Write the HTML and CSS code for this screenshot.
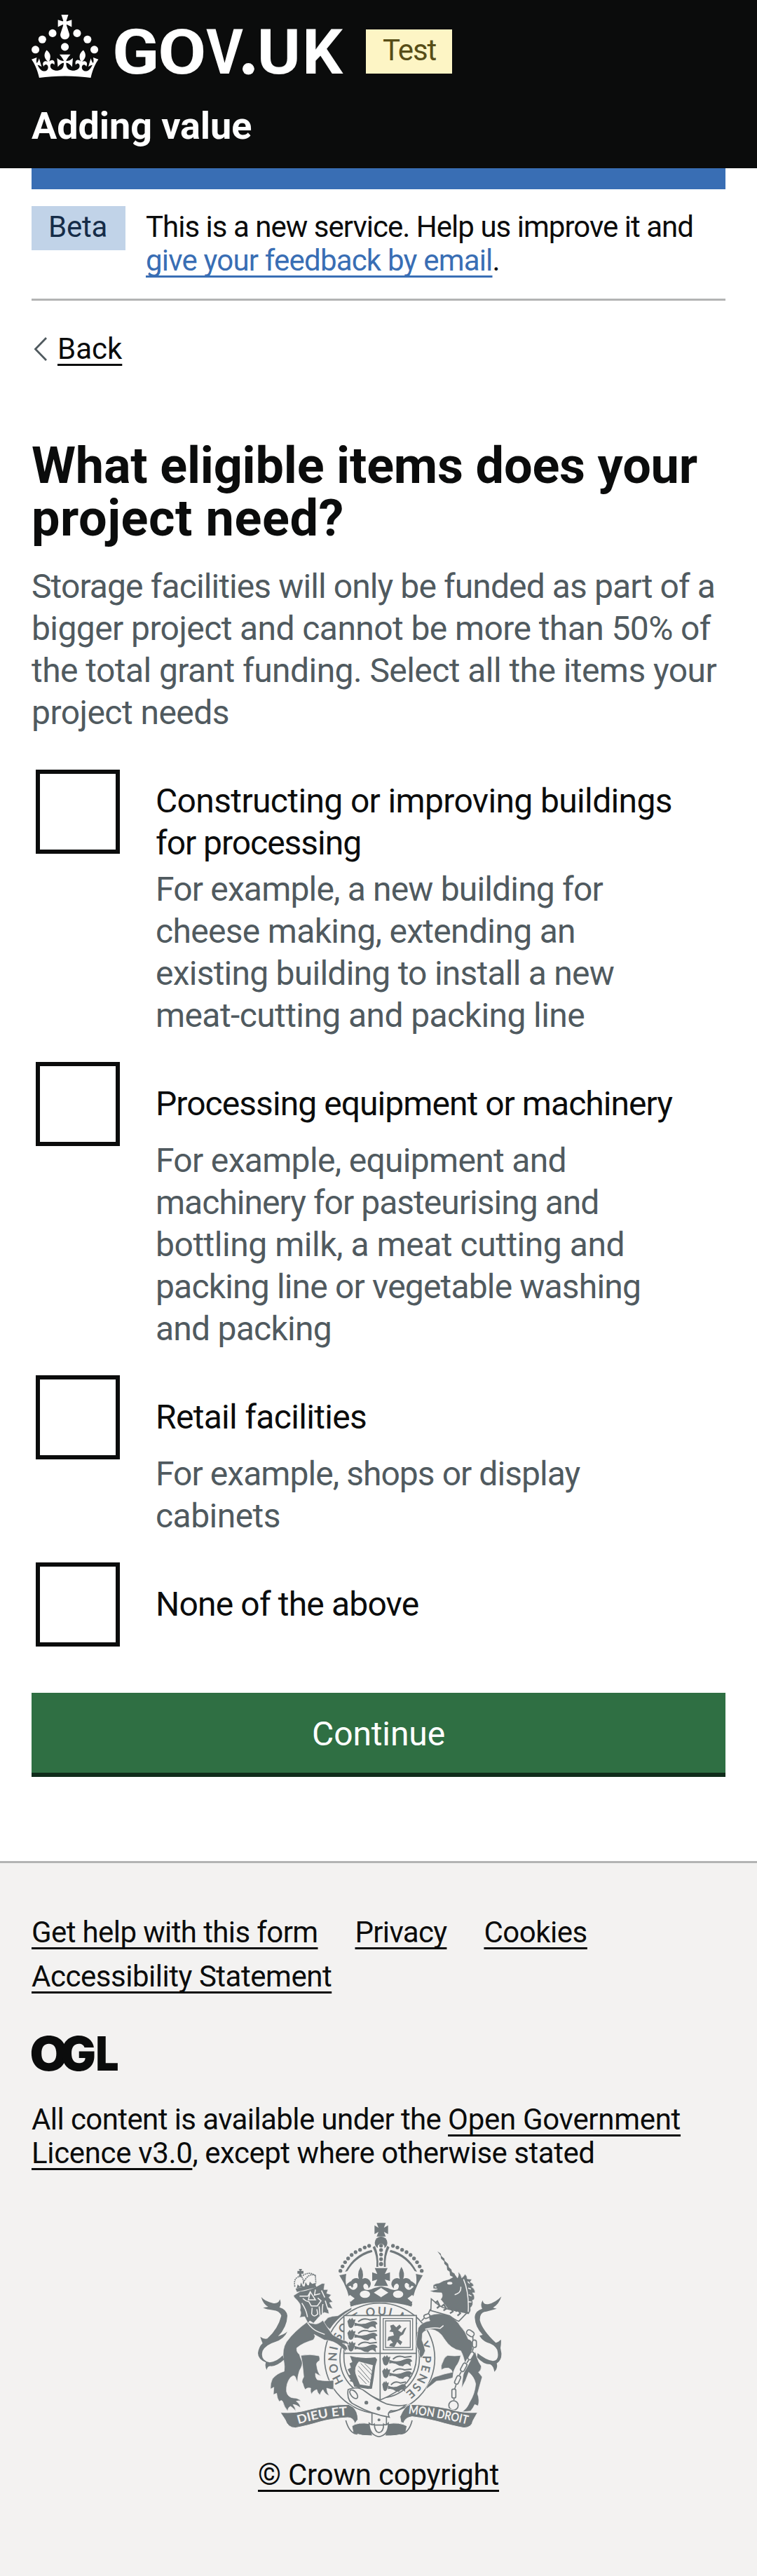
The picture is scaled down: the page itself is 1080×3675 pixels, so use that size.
FILE: index.html
```
<!DOCTYPE html>
<html lang="en">
<head>
<meta charset="utf-8">
<title>What eligible items does your project need? - Adding value - GOV.UK</title>
<link rel="stylesheet" href="styles.css">
</head>
<body>
<header class="header">
  <div class="header__top">
    <svg class="header__logo" viewBox="45 21 446 90" role="img" aria-label="GOV.UK">
      <g transform="translate(45 21) scale(1.5)">
        <circle cx="20" cy="17.6" r="3.7"/><circle cx="10.2" cy="23.5" r="3.7"/><circle cx="3.7" cy="33.2" r="3.7"/><circle cx="31.7" cy="30.6" r="3.7"/><circle cx="43.3" cy="17.6" r="3.7"/><circle cx="53.2" cy="23.5" r="3.7"/><circle cx="59.7" cy="33.2" r="3.7"/>
        <path d="M33.1,9.8c.2-.1.3-.3.5-.5l4.6,2.4v-6.8l-4.6,1.5c-.1-.2-.3-.3-.5-.5l1.9-5.9h-6.7l1.9,5.9c-.2.1-.3.3-.5.5l-4.6-1.5v6.8l4.6-2.4c.1.2.3.3.5.5l-2.6,8c-.9,2.8,1.2,5.7,4.1,5.7h0c3,0,5.1-2.9,4.1-5.7l-2.6-8ZM37,37.9s-3.4,3.8-4.1,6.1c2.2,0,4.2-.5,6.4-2.8l-.7,8.5c-2-2.8-4.4-4.1-5.7-3.8.1,3.1.5,6.7,5.8,7.2,3.7.3,6.7-1.5,7-3.8.4-2.6-2-4.3-3.7-1.6-1.4-4.5,2.4-6.1,4.9-3.2-1.9-4.5-1.8-7.7,2.4-10.9,3,4,2.6,7.3-1.2,11.1,2.4-1.3,6.2,0,4,4.6-1.2-2.8-3.7-2.2-4.2.2-.3,1.7.7,3.7,3,4.2,1.9.3,4.7-.9,7-5.9-1.3,0-2.4.7-3.9,1.7l2.4-8c.6,2.3,1.4,3.7,2.2,4.5.6-1.6.5-2.8,0-5.3l5,1.8c-2.6,3.6-5.2,8.7-7.3,17.5-7.4-1.1-15.7-1.7-24.5-1.7h0c-8.8,0-17.1.6-24.5,1.7-2.1-8.9-4.7-13.9-7.3-17.5l5-1.8c-.5,2.5-.6,3.7,0,5.3.8-.8,1.6-2.3,2.2-4.5l2.4,8c-1.5-1-2.6-1.7-3.9-1.7,2.3,5,5.2,6.2,7,5.9,2.3-.4,3.3-2.4,3-4.2-.5-2.4-3-3.1-4.2-.2-2.2-4.6,1.6-6,4-4.6-3.7-3.7-4.2-7.1-1.2-11.1,4.2,3.2,4.3,6.4,2.4,10.9,2.5-2.8,6.3-1.3,4.9,3.2-1.8-2.7-4.1-1-3.7,1.6.3,2.3,3.3,4.1,7,3.8,5.4-.5,5.7-4.2,5.8-7.2-1.3-.2-3.7,1-5.7,3.8l-.7-8.5c2.2,2.3,4.2,2.7,6.4,2.8-.7-2.3-4.1-6.1-4.1-6.1h10.6,0Z"/>
      </g>
      <text class="wordmark" y="105"><tspan x="160" textLength="67.4" lengthAdjust="spacingAndGlyphs">G</tspan><tspan x="225.2" textLength="69" lengthAdjust="spacingAndGlyphs">O</tspan><tspan x="294.3" textLength="52.5" lengthAdjust="spacingAndGlyphs">V</tspan><tspan x="343">.</tspan><tspan x="366.7" textLength="62.2" lengthAdjust="spacingAndGlyphs">U</tspan><tspan x="431.3" textLength="57.7" lengthAdjust="spacingAndGlyphs">K</tspan></text>
      <circle cx="354.3" cy="98.3" r="8.3"/>
    </svg>
    <span class="tag tag--yellow t118">Test</span>
  </div>
  <div class="header__service">Adding value</div>
</header>

<div class="container">
  <div class="bar"></div>
  <div class="phase">
    <span class="tag tag--blue t26">Beta</span>
    <p class="phase__text"><span class="line t98">This is a new service. Help us improve it and</span><span class="line"><a class="link link--blue t81" href="#">give your feedback by email</a>.</span></p>
  </div>
  <div class="back">
    <svg class="back__icon" viewBox="0 0 24 36"><path d="M21 2 5.500 18 21 34" fill="none" stroke="#505a5f" stroke-width="2.800"/></svg>
    <a class="link" href="#">Back</a>
  </div>

  <main>
    <h1 class="title"><span class="line t18">What eligible items does your</span><span class="line p59">project need?</span></h1>
    <p class="hint hint--intro"><span class="line t90">Storage facilities will only be funded as part of a</span><span class="line t59">bigger project and cannot be more than 50% of</span><span class="line t56">the total grant funding. Select all the items your</span><span class="line t54">project needs</span></p>

    <div class="options">
      <div class="option option--tall">
        <span class="box"></span>
        <div class="option__body">
          <div class="option__label"><span class="line t64">Constructing or improving buildings</span><span class="line t104">for processing</span></div>
          <p class="hint"><span class="line t83">For example, a new building for</span><span class="line t68">cheese making, extending an</span><span class="line t76">existing building to install a new</span><span class="line t59">meat-cutting and packing line</span></p>
        </div>
      </div>
      <div class="option">
        <span class="box"></span>
        <div class="option__body">
          <div class="option__label"><span class="line t95">Processing equipment or machinery</span></div>
          <p class="hint"><span class="line t68">For example, equipment and</span><span class="line t98">machinery for pasteurising and</span><span class="line t47">bottling milk, a meat cutting and</span><span class="line t83">packing line or vegetable washing</span><span class="line t76">and packing</span></p>
        </div>
      </div>
      <div class="option">
        <span class="box"></span>
        <div class="option__body">
          <div class="option__label"><span class="line t68">Retail facilities</span></div>
          <p class="hint"><span class="line t95">For example, shops or display</span><span class="line t54">cabinets</span></p>
        </div>
      </div>
      <div class="option">
        <span class="box"></span>
        <div class="option__body">
          <div class="option__label"><span class="line t83">None of the above</span></div>
        </div>
      </div>
    </div>
    <button class="button" type="button">Continue</button>
  </main>
</div>

<footer class="footer">
  <nav class="footer__links">
    <a class="link t61" href="#">Get help with this form</a>
    <a class="link t68" href="#">Privacy</a>
    <a class="link t47" href="#">Cookies</a>
    <a class="link t47" href="#">Accessibility Statement</a>
  </nav>
  <svg class="ogl" viewBox="0 0 123 51" role="img" aria-label="Open Government Licence">
    <text class="ogl__text" y="50"><tspan x="-2.400" textLength="54.600" lengthAdjust="spacingAndGlyphs">O</tspan><tspan x="41" textLength="51" lengthAdjust="spacingAndGlyphs">G</tspan><tspan x="91.500" textLength="33" lengthAdjust="spacingAndGlyphs">L</tspan></text>
  </svg>
  <p class="licence"><span class="line t59">All content is available under the <a class="link t30" href="#">Open Government</a></span><span class="line t47"><a class="link t35" href="#">Licence v3.0</a>, except where otherwise stated</span></p>

  <div class="copyright">
    <svg class="crest" viewBox="84 92 1044 918" aria-hidden="true">
      <defs>
        <g id="half-crown">
          <circle cx="560" cy="191" r="8"/><circle cx="541" cy="198" r="8"/><circle cx="521" cy="208" r="8"/><circle cx="502" cy="218" r="8"/><circle cx="485" cy="230" r="8"/><circle cx="470" cy="245" r="8"/><circle cx="457" cy="261" r="8"/><circle cx="446" cy="279" r="8"/><circle cx="437" cy="298" r="8"/>
          <path d="M571 208Q496 226 457 302l10-3Q504 236 574 217z"/>
          <path d="M575 197q20 38 16 84h8q3-52-14-90z"/>
          <path d="M430 318l32-7q-5 28 0 48 10-14 24-18l7 26q-12-9-22-2 22 27 38 2 4-18-8-18-16 8-12 24-17-18-2-37 16-13 29-3-9-26 8-52 15 26 7 52 16-9 30 4 14 20-4 36 0-18-14-21-14 6-4 24 18 10 42-4l30-8v60q-70 2-130 27-7-70-48-133z"/>
        </g>
        <g id="passant">
          <path d="M0 12l8-10 4 7 6-9 5 8 7-2-3 12-6 15q-9 12-16 0z"/>
          <path d="M30 20q34 12 66-4 20-8 28 6l-8 4 2 14-10-8q-14 0-22 10l-14-2q-20-14-42-10z"/>
          <path d="M44 14q22-20 50-8l30-4" fill="none" stroke="#71797c" stroke-width="6"/>
        </g>
        <path id="motto-ring" d="M450.700 772.200A184 184 0 1 1 710.500 822.700"/>
        <path id="motto-left" d="M256 954Q370 920 470 916"/>
        <path id="motto-right" d="M728 909Q850 922 984 956"/>
      </defs>
      <g fill="#71797c">
        <path d="M592 93h39l-8 21 18-11v38l-18-10 8 20h-39l8-20-17 10v-38l17 11z"/>
        <circle cx="611" cy="178" r="27"/>
        <path d="M597 190q14-17 28 0l4 95h-36z" fill="#f3f2f1"/>
        <use href="#half-crown"/>
        <use href="#half-crown" transform="matrix(-1 0 0 1 1222 0)"/>
        <circle cx="611" cy="190" r="8"/><circle cx="611" cy="209" r="8"/><circle cx="611" cy="228" r="8"/><circle cx="611" cy="248" r="8"/><circle cx="611" cy="269" r="9"/>
        <path d="M584 286h55l-12 26 22-8v38l-22-7 14 28h-60l14-28-22 7v-38l22 8z"/>
        <g fill="#f3f2f1"><ellipse cx="542" cy="398" rx="22" ry="16"/><ellipse cx="684" cy="398" rx="22" ry="16"/><path d="M580 391l31-20 31 20-31 20zM466 412l12-11 20 15-18 15zM756 412l-12-11-20 15 18 15z"/></g>
      </g>

      <!-- garter -->
      <g fill="none" stroke="#71797c" stroke-width="5">
        <circle cx="605" cy="672" r="236" fill="#f3f2f1"/>
        <circle cx="605" cy="672" r="170"/>
      </g>
      <path d="M478 440Q611 386 745 440L741 450Q611 414 482 450z" fill="#71797c"/>
      <text class="crest__garter"><textPath href="#motto-ring" textLength="855">HONI SOIT QUI MAL Y PENSE</textPath></text>

      <!-- shield -->
      <path d="M452 489h310v178q0 120-155 184-155-64-155-184z" fill="#f3f2f1" stroke="#71797c" stroke-width="5"/>
      <path d="M607 489v362M452 651h310" stroke="#71797c" stroke-width="5"/>
      <g fill="#71797c">
        <g stroke="#71797c" stroke-width="4">
          <use href="#passant" transform="translate(469 502)"/><use href="#passant" transform="translate(469 552)"/><use href="#passant" transform="translate(469 602)"/>
          <use href="#passant" transform="translate(618 662)"/><use href="#passant" transform="translate(618 716)"/><use href="#passant" transform="translate(618 772) scale(.8 1)"/>
        </g>
        <path d="M650 532l14-4 12 12 14-12 8 10-14 14 14 10 12-18 10-4-14 30-14 8-4 14 14 10-8 14-14-14-12 22-22-4 4-10 12-4-10-12-14 4 4-18 24-6-4-14-16-2 8-10z"/>
        <path d="M478 662q52 14 108 6l8 10-8 28q-6 52-14 96l-12 2 16-102-60-16q-26 30-10 64l14 34 46 8-8 12-62-10-6-20-14-4 8-8-14-16 10-4-12-22 14-8-6-18 12-6z"/>
      </g>
      <g fill="none" stroke="#71797c" stroke-width="4">
        <path d="M620 502h126v134H620zM630 512h106v114H630z"/>
        <path d="M514 706l54 62M512 724l48 52M514 746l34 36M524 694l48 50M540 694l34 34" stroke-width="3"/>
      </g>

      <!-- lion -->
      <g fill="#71797c" stroke="#f3f2f1" stroke-width="2">
        <path d="M384 498q18-8 42-8 30-22 60-36l-2 10q-60 34-92 84l-30-26z"/>
        <path d="M268 660Q310 652 346 662Q350 672 348 682Q330 690 336 706Q340 736 354 748Q342 744 330 736Q328 752 338 764Q374 772 408 766L408 806Q396 806 378 800Q380 822 390 832Q372 828 362 806Q350 820 350 830Q338 820 336 806Q318 812 314 826Q306 814 310 800Q296 796 286 806Q280 796 276 780Q268 772 280 752Q276 700 268 660Z"/>
        <path d="M296 516Q240 556 206 602Q186 634 194 680Q200 710 196 728Q166 736 146 760Q136 780 138 804L152 796L150 828L164 822Q166 846 176 858Q186 846 192 862Q196 880 212 898Q212 882 224 878Q234 884 246 898Q244 882 234 870Q250 870 266 884Q264 866 248 856Q258 852 268 856Q258 842 236 842Q212 840 206 814Q204 780 222 756Q238 740 244 752Q248 764 254 776Q252 752 262 724Q278 700 272 684Q264 668 262 656Q248 646 250 628Q276 606 320 594Q334 578 324 570Q350 584 368 594Q410 596 440 624L462 646Q456 630 468 638Q470 620 446 608Q460 606 474 616Q472 598 446 594Q426 584 404 572Q380 540 362 510Q340 530 322 524Q308 524 296 516Z"/>
        <path d="M236 404l28-18q50-6 94-34l12 0-4 26 18 0-6 16 20 6-10 12 16 20-14 2 14 26-20-4 4 26-20-6Q346 490 322 522L306 512 298 522 284 494 262 498Q272 478 264 466 270 444 258 432 250 420 240 412z"/>
      </g>
      <path d="M98 410Q116 430 148 436Q172 440 178 420Q186 440 176 454Q206 462 210 490Q208 540 170 578Q196 570 210 558Q196 590 158 602Q118 614 104 640Q92 682 134 690Q164 688 190 660L196 678Q166 706 142 706Q124 704 122 722Q112 706 118 690Q84 676 84 650Q88 622 104 608Q98 594 94 580Q110 592 124 588Q170 546 184 490Q176 468 148 466Q122 464 106 456L128 452Q106 440 98 410Z" fill="#71797c"/>
      <g fill="#71797c"><path d="M259 290h14l-4 8h10v12h-10l4 12h-14l2-12h-8v-12h10zM245 374l84-18 6 12-84 20zM250 372l4-16 10 10 4-18 8 16 8 0 4-18 8 14 6 0 4-16 10 10 14-4 2 8z"/></g>
      <path d="M242 366q-8-44 28-44 14 18 6 36M278 350q22-46 52-32l2 34M276 318q30-20 56 2" fill="none" stroke="#71797c" stroke-width="5" stroke-dasharray="6 3"/>
      <path d="M262 406l36 0 10-18M330 378l-4 24 24-6M308 388l22 34-30 0zM276 416q12 12 26 14l10 18h26l16-22-14-12M272 436q20 30 24 60M316 456l-2 26q10 18 26 0l-4-20M362 440q-4 24-2 44M356 382l14 30M372 426l12 38M346 450l4 40M296 520q20 28 44 38l30 12" fill="none" stroke="#f3f2f1" stroke-width="4.500"/>

      <!-- unicorn -->
      <g fill="#71797c" stroke="#f3f2f1" stroke-width="2">
        <path d="M896 660Q928 664 952 660Q946 690 932 706Q918 728 918 756Q880 768 848 770Q826 788 802 806Q806 786 822 772Q830 752 854 748Q884 738 916 732Q916 722 900 714Q880 712 870 722Q864 704 876 686Q880 668 896 660Z"/>
        <path d="M820 488Q860 476 896 486Q938 510 950 534Q972 556 984 590Q1012 596 1014 632Q1016 670 1040 706Q1040 724 1028 732L1044 752Q1030 800 1024 824Q1034 852 1026 876L1012 870Q1006 884 994 898L958 902Q982 884 990 860Q1012 826 1016 782Q1010 752 986 732Q974 770 956 800Q960 740 972 706Q966 664 952 640Q910 634 882 590Q862 552 822 548Q796 552 788 566L786 594Q794 612 800 640Q794 662 780 672Q770 658 776 640Q758 626 762 600L770 542Q786 516 820 512Q812 500 820 488Z"/>
        <path d="M834 360Q840 352 860 350Q878 338 902 334Q920 326 928 314L938 328Q946 316 940 302Q954 312 956 328Q966 322 970 312Q980 320 980 332L1000 334L992 346Q1006 350 1008 362L998 366Q1014 376 1014 392L1002 392Q1016 408 1008 422L1002 424Q1008 444 994 456Q998 470 986 484Q940 478 900 466Q886 444 866 420Q878 406 870 392Q850 392 836 390L818 384L838 380L852 376L834 374Z"/>
      </g>
      <g fill="#71797c">
        <path d="M1126 408Q1100 434 1072 440Q1048 444 1046 424Q1034 442 1044 460Q1012 470 1012 498Q1014 540 1046 572L1032 576Q1046 598 1064 604Q1096 612 1108 636Q1120 680 1090 684Q1060 680 1024 650L1022 668Q1048 698 1078 698Q1092 704 1096 730Q1112 714 1106 694Q1128 680 1126 650L1122 628Q1126 606 1124 592Q1112 604 1102 606Q1044 552 1034 510Q1032 474 1062 472L1106 460L1090 456Q1116 440 1126 408Z"/>
        <path d="M852 214l14 10 4 14zM866 232l16 14 2 14-16-14zM880 252l18 16 4 18-20-18zM892 274l20 18 4 18-22-16zM904 296l22 14 4 20-24-12z"/>
      </g>
      <path d="M826 418l-2 50 80 22q26 20 40 24l34-36-40-8q-66-10-86-30z" fill="#f3f2f1" stroke="#71797c" stroke-width="5"/>
      <path d="M842 436l10-8 10 20-12 10M870 450l10-8 10 18-12 8M898 462l10-8 10 18-12 8M930 472l10-8 10 16-12 10" fill="none" stroke="#71797c" stroke-width="7"/>
      <ellipse cx="905" cy="351" rx="11" ry="6" fill="#f3f2f1"/>
      <path d="M840 366l8 2M952 366q4 26-26 34M964 334q24 56 20 140M982 344l8 8M984 372l12 4M986 400l12 6M986 430l12 2M800 548q34-10 64-4l14-12" fill="none" stroke="#f3f2f1" stroke-width="4.500"/>
      <g fill="none" stroke="#71797c" stroke-width="5">
        <path d="M988 572l22 30v34l-36 66-34 60-18 44v48" stroke="#f3f2f1" stroke-width="18"/>
        <rect x="976" y="554" width="34" height="22" rx="10" transform="rotate(35 993 565)"/><rect x="1002" y="594" width="17" height="32" rx="8"/><rect x="988" y="644" width="17" height="36" rx="8" transform="rotate(30 997 660)"/><rect x="956" y="692" width="17" height="38" rx="8" transform="rotate(28 965 711)"/><rect x="930" y="746" width="17" height="38" rx="8" transform="rotate(24 939 765)"/><rect x="914" y="804" width="17" height="38" rx="6"/>
        <path d="M1004 580v14M1006 628l-4 14M986 680l-8 12M954 730l-8 14M932 786l-6 18M923 844v8"/>
        <rect x="794" y="484" width="26" height="16" rx="8" transform="rotate(-20 807 492)"/><path d="M812 484l10-22M796 500l-12 12"/>
        <circle cx="921" cy="874" r="20" fill="#f3f2f1"/>
      </g>

      <!-- ribbons and belt -->
      <g fill="#71797c" stroke="#f3f2f1" stroke-width="3">
        <path d="M486 962Q510 944 564 952L574 1004Q530 1006 492 992Z"/>
        <path d="M722 962Q690 944 640 952L628 1004Q680 1006 716 992Z"/>
        <path d="M180 904Q250 908 300 892Q390 870 472 870L490 880Q512 900 512 934L498 952Q494 926 468 926Q400 930 350 944Q290 962 244 970Q212 970 200 934Z"/>
        <path d="M1024 904Q960 908 900 888Q810 870 734 870Q712 876 692 922L696 946L708 950Q712 926 744 922Q800 928 850 942Q920 962 966 970Q1000 968 1004 940Z"/>
      </g>
      <g fill="#f3f2f1" stroke="#71797c" stroke-width="5">
        <path d="M572 906v52h62v-52z"/>
        <path d="M470 806Q510 790 540 812Q590 850 636 868Q680 880 716 872Q684 902 654 896Q636 906 646 924Q570 912 500 872Q462 858 470 806Z"/>
        <path d="M560 950Q574 962 582 954Q584 988 602 990Q622 988 622 954Q632 962 642 950Q644 1000 602 1008Q560 1000 560 950Z"/>
        <ellipse cx="494" cy="826" rx="12" ry="22" transform="rotate(-40 494 826)"/>
        <path d="M460 938Q476 996 510 996M744 938Q730 994 694 996" fill="none"/>
      </g>
      <g fill="#71797c"><circle cx="548" cy="862" r="8"/><circle cx="600" cy="887" r="8"/><circle cx="602" cy="936" r="6"/></g>
      <text class="crest__ribbon"><textPath href="#motto-left" textLength="214" lengthAdjust="spacingAndGlyphs">DIEU ET</textPath></text>
      <text class="crest__ribbon"><textPath href="#motto-right" textLength="256" lengthAdjust="spacingAndGlyphs">MON DROIT</textPath></text>
    </svg>
    <a class="link t22" href="#">© Crown copyright</a>
  </div>
</footer>
</body>
</html>
```

FILE: styles.css
```
* { box-sizing: border-box; }
body { margin: 0; background: #fff; color: #0b0c0c; font-family: Roboto, "Liberation Sans", sans-serif; font-size: 42px; line-height: 48px; }
p, h1 { margin: 0; }
.line { display: block; white-space: nowrap; }

.link { color: inherit; text-decoration: underline; text-decoration-thickness: 3px; text-underline-offset: 7px; text-decoration-skip-ink: none; }
.link--blue { color: #396eb4; }

.header { height: 240px; padding: 21px 45px 0; background: #0b0c0c; color: #fff; }
.header__top { display: flex; align-items: flex-start; height: 90px; }
.header__logo { width: 446px; height: 90px; overflow: visible; fill: #fff; }
.wordmark { font-weight: 700; font-size: 88.600px; }
.header__top .tag { margin: 21px 0 0 31px; }
.header__service { margin-top: 39px; font-size: 54px; line-height: 60px; font-weight: 700; letter-spacing: -.100px; }

.tag { flex: none; height: 63px; line-height: 60px; padding: 0 24px; white-space: nowrap; }
.tag--yellow { width: 123px; background: #fdf5c5; color: #574d17; }
.tag--blue { width: 134px; background: #c1d3e8; color: #162c48; }

.container { margin: 0 45px; }
.bar { height: 30px; background: #396eb4; }
.phase { display: flex; align-items: flex-start; gap: 29px; height: 159px; padding-top: 24px; border-bottom: 3px solid #b3b4b4; }
.phase__text { padding-top: 6px; }
.back { display: flex; gap: 9px; margin-top: 45px; }
.back__icon { width: 24px; height: 36px; margin: 6px 4px 0 0; }

.title { margin-top: 105px; font-size: 72px; line-height: 75px; font-weight: 700; }
.hint { color: #505a5f; font-size: 48px; line-height: 60px; }
.hint--intro { margin-top: 30px; }

.options { display: flex; flex-direction: column; gap: 36px; margin: 51px 0 0 6px; }
.option { display: flex; gap: 51px; min-height: 120px; }
.box { flex: none; width: 120px; height: 120px; border: 6px solid #0b0c0c; }
.option__body { padding-top: 30px; font-size: 48px; line-height: 60px; }
.option__label + .hint { margin-top: 21px; }
.option--tall .option__body { padding-top: 15px; }
.option--tall .option__label + .hint { margin-top: 6px; }

.button { display: block; width: 100%; height: 114px; margin-top: 66px; padding: 3px 0 0; border: 0; background: #2f6f43; box-shadow: 0 6px 0 #102c1b; color: #fff; font: 48px/60px Roboto, sans-serif; letter-spacing: -.120px; }

.footer { height: 1020px; margin-top: 126px; padding: 75px 45px 0; border-top: 3px solid #b3b4b4; background: #f3f2f1; }
.footer__links { display: flex; flex-wrap: wrap; gap: 15px 53px; width: 900px; }
.ogl { display: block; width: 123px; height: 51px; margin-top: 60px; overflow: visible; fill: #0b0c0c; }
.ogl__text { font-family: Inter, sans-serif; font-weight: 900; font-size: 68px; }
.licence { margin-top: 45px; }
.copyright { display: flex; flex-direction: column; align-items: center; margin-top: 75px; }
.crest { width: 348px; height: 306px; margin: 0 0 30px 4px; }
.crest__garter { font-size: 50px; fill: #71797c; font-family: Lato, sans-serif; font-weight: 700; }
.crest__ribbon { font-size: 52px; fill: #f3f2f1; font-family: Lato, sans-serif; font-weight: 700; }

/* letter-spacing steps */
.t118 { letter-spacing: -1.180px; } .t104 { letter-spacing: -1.040px; }
.t98 { letter-spacing: -.980px; } .t95 { letter-spacing: -.950px; }
.t90 { letter-spacing: -.900px; } .t83 { letter-spacing: -.830px; }
.t81 { letter-spacing: -.810px; } .t76 { letter-spacing: -.760px; }
.t68 { letter-spacing: -.680px; } .t64 { letter-spacing: -.640px; }
.t61 { letter-spacing: -.610px; } .t59 { letter-spacing: -.590px; }
.t56 { letter-spacing: -.560px; } .t54 { letter-spacing: -.540px; }
.t47 { letter-spacing: -.470px; } .t35 { letter-spacing: -.350px; }
.t30 { letter-spacing: -.300px; } .t26 { letter-spacing: -.260px; }
.t22 { letter-spacing: -.220px; } .t18 { letter-spacing: -.180px; }
.p59 { letter-spacing: .590px; }
```
